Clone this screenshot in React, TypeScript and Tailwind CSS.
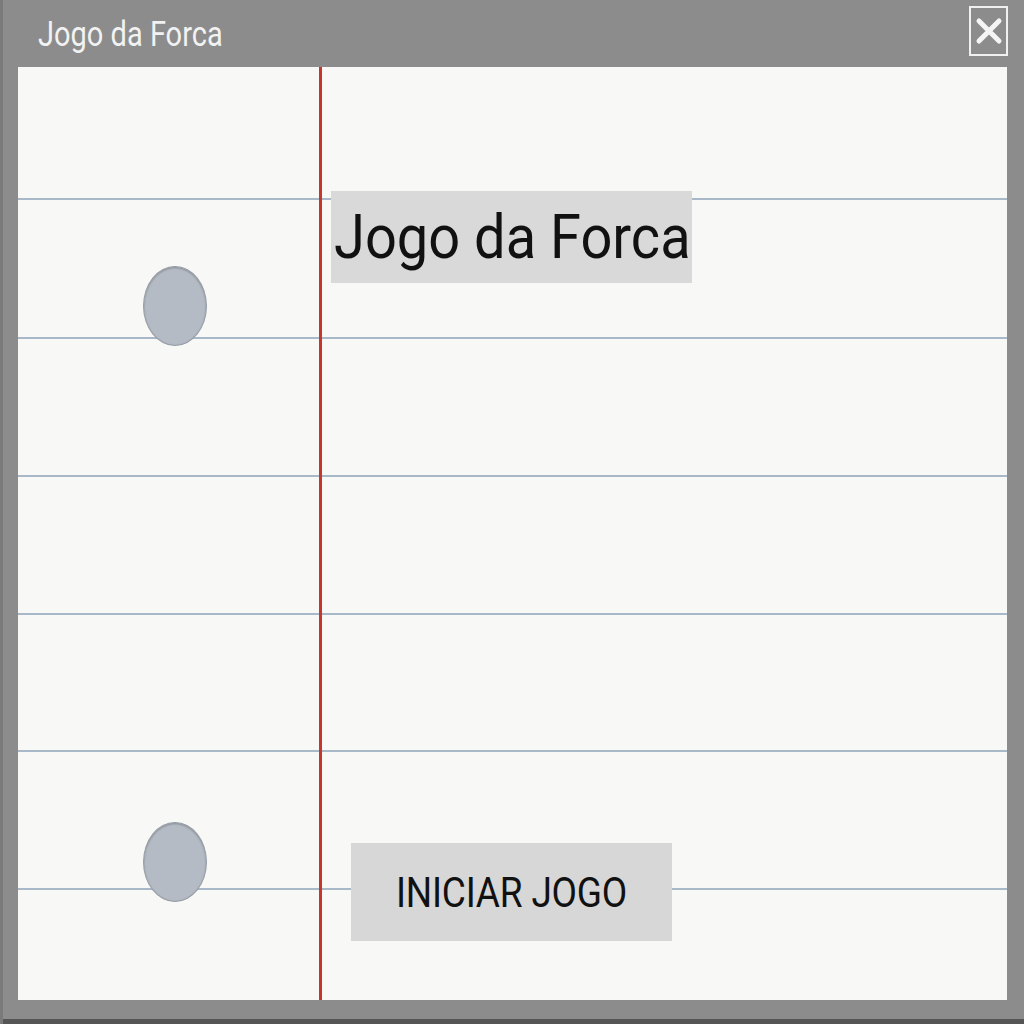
import React from "react";

const font = { fontFamily: "Roboto, 'Liberation Sans', sans-serif" };

const Hole: React.FC = () => (
    <div className="w-[64px] h-[80px] rounded-[50%] bg-[#b5bbc4] border border-[#969ca6] shadow-[inset_0_1px_2px_rgba(0,0,0,0.25)]" />
);

export default function App() {
    const lines = [133, 139, 138, 138, 137, 138];

    return (
        <div className="w-[1024px] h-[1024px] bg-[#8c8c8c] flex flex-col border-l-[3px] border-[#7a7a7a]" style={font}>
            <div className="h-[67px] flex items-start justify-between pl-[35px] pr-[16px]">
                <span className="text-[#f2f2f2] text-[29px] leading-none mt-[17px] scale-y-[1.2] origin-top">Jogo da Forca</span>
                <button className="mt-[6px] w-[39px] h-[50px] border-2 border-[#f0f0f0] flex items-center justify-center">
                    <svg width="28" height="30" viewBox="0 0 28 30">
                        <path d="M4 5 L24 25 M24 5 L4 25" stroke="#f5f5f5" strokeWidth="5" strokeLinecap="round" />
                    </svg>
                </button>
            </div>

            <div className="relative ml-[15px] mr-[17px] h-[933px] bg-[#f8f8f6] overflow-hidden">
                {/* ruled lines */}
                <div className="absolute inset-0 flex flex-col">
                    {lines.map((h, i) => (
                        <div key={i} className="border-b-2 border-[#a9b8c8]" style={{ height: h }} />
                    ))}
                </div>

                <div className="relative h-full flex">
                    <div className="w-[301px] flex flex-col items-center pl-[12px] pt-[199px] gap-[476px]">
                        <Hole />
                        <Hole />
                    </div>
                    <div className="w-[3px] h-full bg-[#c4362e]" />
                    <div className="flex-1 flex flex-col pl-[9px] pt-[124px]">
                        <div className="w-[361px] h-[92px] bg-[#d9d9d9] flex items-center pl-[3px]">
                            <span className="text-[#111] text-[56px] leading-none scale-y-[1.1] whitespace-nowrap">Jogo da Forca</span>
                        </div>
                        <button className="ml-[20px] mt-[560px] w-[321px] h-[98px] bg-[#d7d7d7] flex items-center justify-center">
                            <span className="text-[#111] text-[37px] leading-none scale-y-[1.15] tracking-[-0.2px]">INICIAR JOGO</span>
                        </button>
                    </div>
                </div>
            </div>

            <div className="flex-1 border-b-[5px] border-[#555]" />
        </div>
    );
}
